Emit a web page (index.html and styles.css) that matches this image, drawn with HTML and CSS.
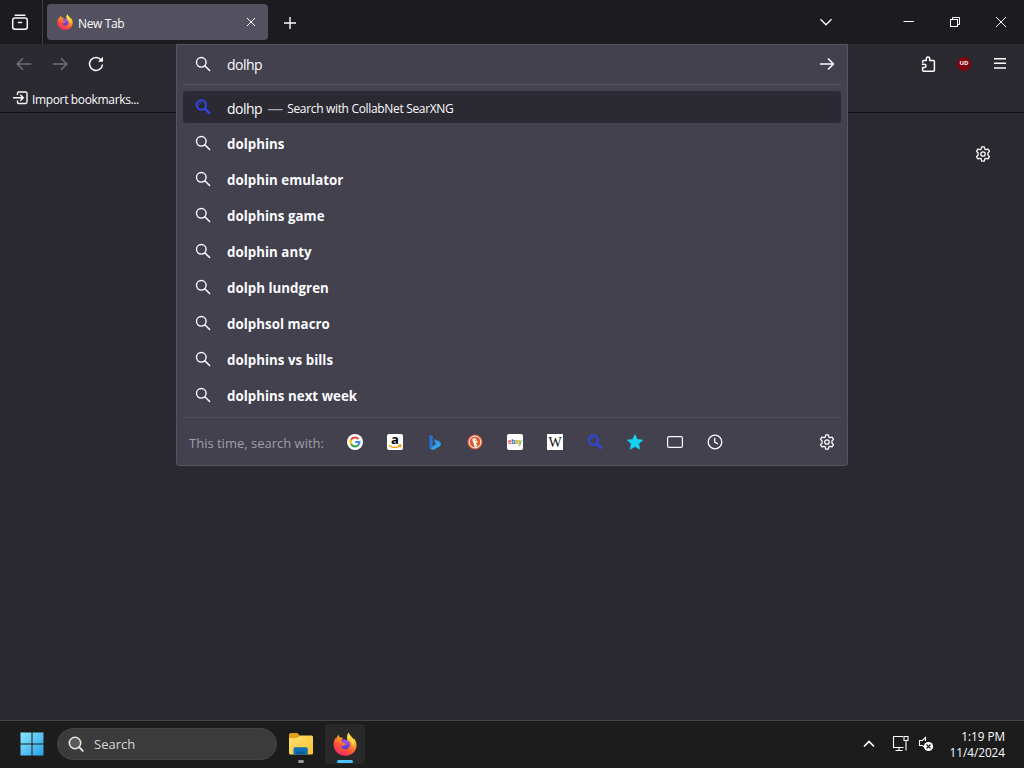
FILE: index.html
```html
<!DOCTYPE html>
<html lang="en">
<head>
    <meta charset="UTF-8">
    <title>New Tab</title>
    <link rel="stylesheet" href="styles.css">
</head>
<body>

<!-- shared icons -->
<svg class="defs" width="0" height="0">
    <defs>
        <linearGradient id="fx_body" x1="0.8" y1="0" x2="0.25" y2="1">
            <stop offset="0" stop-color="#fff44f"/>
            <stop offset="0.35" stop-color="#ffa62b"/>
            <stop offset="0.65" stop-color="#ff5634"/>
            <stop offset="1" stop-color="#f0246e"/>
        </linearGradient>
        <linearGradient id="fx_globe" x1="0" y1="0" x2="0" y2="1">
            <stop offset="0" stop-color="#a058f5"/>
            <stop offset="1" stop-color="#5438c8"/>
        </linearGradient>
        <linearGradient id="win" x1="0" y1="0" x2="1" y2="1">
            <stop offset="0" stop-color="#8be4fc"/>
            <stop offset="1" stop-color="#26a3e8"/>
        </linearGradient>
        <linearGradient id="folder" x1="0" y1="0" x2="1" y2="1">
            <stop offset="0" stop-color="#ffdf70"/>
            <stop offset="1" stop-color="#fcc42f"/>
        </linearGradient>
        <linearGradient id="bing" x1="0" y1="0" x2="1" y2="1">
            <stop offset="0" stop-color="#2a7be0"/>
            <stop offset="1" stop-color="#32bdf2"/>
        </linearGradient>
    </defs>
    <symbol id="search" viewBox="0 0 16 16">
        <circle cx="6.3" cy="6.3" r="4.8" fill="none" stroke="currentColor" stroke-width="1.4"/>
        <path d="M9.8 9.8l4.8 4.700" fill="none" stroke="currentColor" stroke-width="1.6" stroke-linecap="round"/>
    </symbol>
    <symbol id="searx" viewBox="0 0 16 16">
        <circle cx="6.3" cy="6" r="4.7" fill="none" stroke="#3146e6" stroke-width="2"/>
        <path d="M4 6a2.4 2.4 0 0 1 2.4-2.3" fill="none" stroke="#3146e6" stroke-width="0.9"/>
        <path d="M9.8 9.6l5 5" fill="none" stroke="#3146e6" stroke-width="2.4"/>
    </symbol>
    <symbol id="gear" viewBox="0 0 16 16">
        <path d="M6.7.9h2.6l.5 2.200 1.100.6 2.200-.6 1.400 2.300-1.600 1.600v2l1.600 1.600-1.400 2.300-2.200-.6-1.100.6-.5 2.200H6.700l-.5-2.200-1.100-.6-2.200.6-1.400-2.300 1.600-1.600V7L1.500 5.400l1.400-2.300 2.200.6 1.100-.6z" fill="none" stroke="currentColor" stroke-width="1.3" stroke-linejoin="round"/>
        <circle cx="8" cy="8" r="2.2" fill="none" stroke="currentColor" stroke-width="1.3"/>
    </symbol>
    <symbol id="firefox" viewBox="0 0 24 24">
        <path d="M15.7.5c.2 2.200 2.200 3.400 3.600 5.200.6.800.9 1.400 1.200 2.100.2-.8.100-1.400 0-2 2.300 2.600 3.300 5.600 3 8.200C22.900 20 18.100 23.800 12.300 23.800 6 23.800.8 19.200.6 13c-.1-3 .8-5.400 2-7.200l.4 1.500C3.600 5.500 4.400 3.900 5.700 2.800c.1 1.200.5 2 1.200 2.700 1.200-.2 2.500 0 3.500.5-1.400 1-1.900 1.900-2 2.700l2.400.7c1.100-.8 2.300-.8 3.400-.2-.4-3.400-.4-6.500 1.500-8.700z" fill="url(#fx_body)"/>
        <path d="M8.400 8.700c1.500-1.300 3.200-1.500 4.700-.7 2.600.8 4.200 2.500 4 5-.2 2.600-2.200 4.300-4.600 4.300-2.600 0-4.500-1.700-4.700-4.100 1.200.8 2.700.8 3.600.1.700-.6 1.500-.9 2.300-1-.7-1.100-2-1.300-3.100-1.100-.8-.2-1.800-1.200-2.200-2.500z" fill="url(#fx_globe)"/>
        <path d="M15.700.5c.2 2.200 2.200 3.400 3.600 5.200 2 2.800 2.300 6.300.8 9-.1-3.400-1.500-5.300-3.300-6.800C14.500 5.800 14 2.800 15.700.5z" fill="#ffdf45"/>
    </symbol>
</svg>

<div class="screen">

    <div class="tabbar">
        <div class="view_btn">
            <svg width="18" height="18" viewBox="0 0 18 18" fill="none" stroke="currentColor" stroke-width="1.5" stroke-linecap="round">
                <path d="M4.2 2.2h9.6"/>
                <rect x="1.7" y="5" width="14.6" height="11.3" rx="2.2"/>
                <path d="M7.5 9.500h3"/>
            </svg>
        </div>
        <div class="tab">
            <svg width="16" height="16"><use href="#firefox"/></svg>
            <span class="tab_title">New Tab</span>
            <svg width="10" height="10" viewBox="0 0 10 10" stroke="currentColor"><path d="M1 1l8 8M9 1l-8 8"/></svg>
        </div>
        <div class="new_tab">
            <svg width="12" height="12" viewBox="0 0 12 12" stroke="currentColor" stroke-width="1.4"><path d="M6 0v12M0 6h12"/></svg>
        </div>
        <div class="win_btns">
            <svg width="14" height="14" viewBox="0 0 14 14" fill="none" stroke="currentColor" stroke-width="1.4"><path d="M1.5 4.300L7 9.700l5.500-5.400"/></svg>
            <svg class="min" width="12" height="12" viewBox="0 0 12 12" stroke="currentColor"><path d="M0.5 5.5h10.5"/></svg>
            <svg width="12" height="12" viewBox="0 0 12 12" fill="none" stroke="currentColor"><rect x="1.5" y="3.5" width="7" height="7"/><path d="M3.5 3.5v-2h7v7h-2"/></svg>
            <svg width="12" height="12" viewBox="0 0 12 12" stroke="currentColor"><path d="M1 1l10 10M11 1L1 11"/></svg>
        </div>
    </div>

    <div class="navbar">
        <div class="nav_left">
            <svg class="dim" width="16" height="16" viewBox="0 0 16 16"><path d="M15.3 8H1.2M7 2.2L1.2 8 7 13.8"/></svg>
            <svg class="dim" width="16" height="16" viewBox="0 0 16 16"><path d="M.7 8h14.1M9 2.2L14.8 8 9 13.8"/></svg>
            <svg width="16" height="16" viewBox="0 0 16 16"><path d="M13.2 4A6.5 6.5 0 1 0 14.5 8.5"/><path d="M15 .8v5H10z" fill="currentColor" stroke="none"/></svg>
        </div>
        <div class="nav_right">
            <svg width="16" height="16" viewBox="0 0 16 16"><path d="M2.600 6.700V5.500a1 1 0 0 1 1-1h2.700V2.700a1.700 1.700 0 0 1 3.400 0v1.800h3.700a1 1 0 0 1 1 1v8.700a1 1 0 0 1-1 1H3.600a1 1 0 0 1-1-1v-2.600h1.700a1.700 1.700 0 0 0 0-3.400H1.800" stroke-linejoin="round"/></svg>
            <span class="ublock">UD</span>
            <svg width="14" height="14" viewBox="0 0 14 14"><path d="M1 1.700h12M1 6.300h12M1 10.900h12"/></svg>
        </div>
    </div>

    <div class="bookmarks">
        <svg width="15" height="14" viewBox="0 0 15 14" fill="none" stroke="currentColor" stroke-width="1.4">
            <path d="M4.500 4V2.200a1.200 1.200 0 0 1 1.200-1.200h6.900a1.400 1.400 0 0 1 1.400 1.400v8.700a1.400 1.400 0 0 1-1.400 1.400H5.700a1.200 1.200 0 0 1-1.200-1.200V9.500M0 6.800h10M7.300 3.800l3 3-3 3"/>
        </svg>
        <span>Import bookmarks...</span>
    </div>

    <div class="content">
        <svg width="16" height="16"><use href="#gear"/></svg>
    </div>

    <div class="urlbar">
        <div class="url_input">
            <svg class="icon" width="16" height="16"><use href="#search"/></svg>
            <span class="typed">dolhp</span>
            <svg width="16" height="16" viewBox="0 0 16 16" fill="none" stroke="currentColor" stroke-width="1.5"><path d="M1 8h13.5M9 2.5L14.5 8 9 13.5"/></svg>
        </div>
        <ul class="results">
            <li class="selected">
                <svg class="icon" width="16" height="16"><use href="#searx"/></svg>
                <span class="typed">dolhp</span>
                <span class="dash">—</span>
                <span class="action">Search with CollabNet SearXNG</span>
            </li>
            <li><svg class="icon" width="16" height="16"><use href="#search"/></svg><b>dolphins</b></li>
            <li><svg class="icon" width="16" height="16"><use href="#search"/></svg><b>dolphin emulator</b></li>
            <li><svg class="icon" width="16" height="16"><use href="#search"/></svg><b>dolphins game</b></li>
            <li><svg class="icon" width="16" height="16"><use href="#search"/></svg><b>dolphin anty</b></li>
            <li><svg class="icon" width="16" height="16"><use href="#search"/></svg><b>dolph lundgren</b></li>
            <li><svg class="icon" width="16" height="16"><use href="#search"/></svg><b>dolphsol macro</b></li>
            <li><svg class="icon" width="16" height="16"><use href="#search"/></svg><b>dolphins vs bills</b></li>
            <li><svg class="icon" width="16" height="16"><use href="#search"/></svg><b>dolphins next week</b></li>
        </ul>
        <div class="engines">
            <span class="engines_label">This time, search with:</span>
            <div class="engine_list">
                <!-- google -->
                <svg width="16" height="16" viewBox="0 0 16 16" fill="none" stroke-width="2.1">
                    <circle cx="8" cy="8" r="8" fill="#fff"/>
                    <path d="M11.4 5A4.5 4.5 0 0 0 4.1 5.8" stroke="#ea4335"/>
                    <path d="M4.1 5.8a4.5 4.5 0 0 0 0 4.4" stroke="#fbbc05"/>
                    <path d="M4.1 10.2a4.5 4.5 0 0 0 6.800 1.200" stroke="#34a853"/>
                    <path d="M10.9 11.4A4.5 4.5 0 0 0 12.5 8H8.2" stroke="#4285f4"/>
                </svg>
                <!-- amazon -->
                <svg width="16" height="16" viewBox="0 0 16 16">
                    <rect width="16" height="16" rx="2" fill="#fff"/>
                    <text class="amazon" x="8" y="9.8" text-anchor="middle">a</text>
                    <path d="M2 11.200c3.500 2.700 8 2.800 11.200.8M11.300 11.200l2.700-.3-.6 2.400" fill="none" stroke="#f90" stroke-width="1.2"/>
                </svg>
                <!-- bing -->
                <svg width="16" height="16" viewBox="0 0 16 16">
                    <path d="M2.500.8l3.200 1.200v9.700l-3.200 2.500z" fill="#2873db"/>
                    <path d="M7 5l5 2.300c2 1 2.500 3.500.7 5L6.200 16l-3.700-1.800 3.200-2.200 3.700-2-1.500-.8z" fill="url(#bing)"/>
                </svg>
                <!-- duckduckgo -->
                <svg width="16" height="16" viewBox="0 0 16 16">
                    <circle cx="8" cy="8" r="7.6" fill="#de5833"/>
                    <circle cx="8" cy="8" r="5.900" fill="none" stroke="#fff" stroke-width="1"/>
                    <path d="M5.400 5c.9-1.300 3.300-1.100 4.100.4.500 1 .3 1.700.4 2.500l-.8 1.100 1.200 3.300-2.600.6L6.400 8.600c-.6-1.400-.8-2.300-1-3.600z" fill="#fff"/>
                    <path d="M8.900 7.800l2.500-.3-.2 1-2 .5z" fill="#fdd20a"/>
                    <circle cx="8.300" cy="6.400" r=".5" fill="#2d4f8e"/>
                    <path d="M9.500 11l1.600-.4-.2 1.500-1 .2z" fill="#65bc46"/>
                </svg>
                <!-- ebay -->
                <svg width="16" height="16" viewBox="0 0 16 16">
                    <rect width="16" height="16" rx="2" fill="#fff"/>
                    <text class="ebay" x="1" y="10"><tspan fill="#e53238">e</tspan><tspan fill="#0064d2">b</tspan><tspan fill="#e0a000">a</tspan><tspan fill="#76a80c">y</tspan></text>
                </svg>
                <!-- wikipedia -->
                <svg width="16" height="16" viewBox="0 0 16 16">
                    <rect width="16" height="16" fill="#fff"/>
                    <text class="wiki" x="8" y="12.7" text-anchor="middle">W</text>
                </svg>
                <svg width="16" height="16"><use href="#searx"/></svg>
                <!-- bookmarks -->
                <svg width="16" height="16" viewBox="0 0 16 16"><path d="M8 .5l2.300 4.900 5.400.7-4 3.600 1.100 5.500L8 12.500l-4.800 2.700 1.100-5.500-4-3.600 5.400-.7z" fill="#12d4f2" stroke="#12d4f2" stroke-width=".6" stroke-linejoin="round"/></svg>
                <!-- tabs -->
                <svg width="16" height="16" viewBox="0 0 16 16"><rect x=".6" y="2.6" width="14.8" height="10.8" rx="1.5" fill="none" stroke="currentColor" stroke-width="1.2"/></svg>
                <!-- history -->
                <svg width="16" height="16" viewBox="0 0 16 16" fill="none" stroke="currentColor" stroke-width="1.3"><circle cx="8" cy="8" r="6.8"/><path d="M7.7 3.800v4.300l3.200 1.800"/></svg>
            </div>
            <svg class="engines_gear" width="16" height="16"><use href="#gear"/></svg>
        </div>
    </div>

    <div class="taskbar">
        <svg class="start" width="24" height="24" viewBox="0 0 24 24"><path d="M.5.5h11v11H.5zM12.5.5h11v11h-11zM.5 12.5h11v11H.5zM12.5 12.5h11v11h-11z" fill="url(#win)"/></svg>
        <div class="task_search">
            <svg width="16" height="16" viewBox="0 0 16 16"><circle cx="7" cy="7" r="5.7" fill="#5a5a5a" stroke="#e4e4e4" stroke-width="1.6"/><path d="M11.200 11.200l3.600 3.700" stroke="#e4e4e4" stroke-width="1.9" stroke-linecap="round"/></svg>
            <span>Search</span>
        </div>
        <div class="app">
            <svg width="26" height="24" viewBox="0 0 26 24">
                <path d="M1 3a2 2 0 0 1 2-2h6.500l2.500 3h-1L8 8H1z" fill="#e3a01b"/>
                <path d="M1 6h7.500L12 3.500h11.500A1.500 1.500 0 0 1 25 5v16a1.500 1.500 0 0 1-1.500 1.500h-21A1.500 1.500 0 0 1 1 21z" fill="url(#folder)"/>
                <path d="M5.500 22.500V17A1.800 1.800 0 0 1 7.300 15.200H18A1.800 1.800 0 0 1 19.800 17v5.500z" fill="#0f70b8"/>
                <path d="M8.500 19.500h8.500v3H8.500z" fill="#0b5a96"/>
            </svg>
            <i class="dot"></i>
        </div>
        <div class="app active">
            <svg width="24" height="24"><use href="#firefox"/></svg>
            <i class="dot"></i>
        </div>
        <div class="tray">
            <svg width="12" height="12" viewBox="0 0 12 12" fill="none" stroke="#fff" stroke-width="1.6"><path d="M1 8.5l5-5 5 5"/></svg>
            <svg class="net" width="17" height="17" viewBox="0 0 17 17" fill="none" stroke="#fff" stroke-width="1.1"><path d="M11 1.5H1.500v11h10M7 12.500v3M3.500 15.500h7"/><path d="M12 1.500h4v4h-4zM14 5.500v10"/></svg>
            <svg class="vol" width="16" height="16" viewBox="0 0 16 16"><path d="M7.500 5V1.500L4.500 4.500H1.500v5H4.500l1.500 1.300" fill="none" stroke="#fff" stroke-width="1.1"/><circle cx="10.500" cy="10.500" r="4.600" fill="#fff"/><path d="M8.500 8.500l4 4M12.500 8.500l-4 4" stroke="#1c1c1c" stroke-width="1.1"/></svg>
            <div class="clock">
                <div>1:19 PM</div>
                <div>11/4/2024</div>
            </div>
        </div>
    </div>

</div>
</body>
</html>
```
FILE: styles.css
```css
*{
    margin: 0px;
    padding: 0px;
    box-sizing: border-box;
}
body{
    background-color: #2a2930;
    color: #fbfbfe;
    font-family: "Open Sans", "Noto Sans", sans-serif;
    font-size: 12px;
    overflow: hidden;
}
svg{
    display: block;
    flex-shrink: 0;
    overflow: visible;
}
.defs{
    position: absolute;
}

.screen{
    position: relative;
    width: 1024px;
    height: 768px;
    display: flex;
    flex-direction: column;
}

/* tab strip */
.tabbar{
    display: flex;
    height: 44px;
    background-color: #1c1b20;
}
.view_btn{
    width: 43px;
    padding: 13px 0px 0px 11px;
    border-right: 1px solid #3f3e48;
}
.tab{
    display: flex;
    align-items: center;
    width: 221px;
    height: 36px;
    margin: 4px 0px 0px 4px;
    padding: 0px 12px 0px 10px;
    border-radius: 4px;
    background-color: #53515f;
}
.tab_title{
    flex: 1;
    margin-left: 5px;
    padding-top: 2px;
    letter-spacing: -0.35px;
}
.new_tab{
    padding: 17px 0px 0px 16px;
}
.win_btns{
    display: flex;
    align-items: center;
    gap: 34px;
    margin-left: auto;
    padding-right: 17px;
}
.win_btns .min{
    margin-left: 36px;
}

/* toolbar */
.navbar{
    display: flex;
    justify-content: space-between;
    height: 40px;
    padding: 12px 17px 0px 16px;
    background-color: #2b2a31;
}
.navbar svg{
    fill: none;
    stroke: currentColor;
    stroke-width: 1.5;
}
.nav_left{
    display: flex;
    gap: 20px;
}
.nav_left .dim{
    color: #6f6e77;
}
.nav_right{
    display: flex;
    gap: 22px;
}
.nav_right svg:first-child{
    margin-right: -1px;
}
.nav_right svg:last-child{
    margin-top: 1px;
}
.ublock{
    width: 14px;
    height: 14px;
    margin-top: 1px;
    border-radius: 7px;
    background-color: #800610;
    font-size: 6px;
    font-weight: bold;
    line-height: 13px;
    text-align: center;
}
.bookmarks{
    display: flex;
    align-items: center;
    gap: 4px;
    height: 29px;
    padding-left: 13px;
    background-color: #2b2a31;
    border-bottom: 1px solid #0f0e14;
    letter-spacing: -0.35px;
}
.bookmarks span{
    padding-top: 2px;
}
.content{
    flex: 1;
    padding: 33px 33px 0px 0px;
}
.content svg{
    margin-left: auto;
}

/* address bar drop-down, opened over the toolbar */
.urlbar{
    position: absolute;
    left: 176px;
    top: 44px;
    width: 672px;
    height: 422px;
    border: 1px solid #55535f;
    border-radius: 0px 0px 3px 3px;
    background-color: #42414d;
}
.url_input{
    display: flex;
    align-items: center;
    height: 40px;
    margin: 0px 6px;
    padding: 0px 6px 1px 12px;
    border-bottom: 1px solid #565561;
}
.url_input .typed{
    flex: 1;
    padding-top: 1px;
}
.icon{
    margin-right: 16px;
}
.typed{
    font-size: 14px;
    letter-spacing: -0.5px;
}
.results{
    list-style: none;
    padding: 6px 6px 0px;
}
.results li{
    display: flex;
    align-items: center;
    height: 32px;
    margin-bottom: 4px;
    padding-left: 12px;
    border-radius: 3px;
}
.results .selected{
    background-color: #2b2a33;
}
.results .typed{
    padding-top: 2px;
}
.results b{
    padding-top: 2px;
    font-size: 13.3px;
    letter-spacing: 0.03px;
}
.selected .dash{
    margin: 0px 4px 0px 5px;
    padding-top: 2px;
    color: #a5a4ad;
    font-size: 16px;
}
.selected .action{
    padding-top: 2px;
    letter-spacing: -0.33px;
}
.engines{
    display: flex;
    align-items: center;
    height: 49px;
    margin: 6px 6px 0px;
    padding: 0px 6px 0px 6px;
    border-top: 1px solid #4e4d59;
}
.engines_label{
    width: 158px;
    padding-top: 2px;
    color: #9f9ea8;
    font-size: 13px;
}
.engine_list{
    display: flex;
    gap: 24px;
}
.engines_gear{
    margin-left: auto;
}
.amazon{
    font: bold 13px "Open Sans", sans-serif;
}
.ebay{
    font: bold 6.5px "Liberation Sans", sans-serif;
    letter-spacing: -0.3px;
}
.wiki{
    font: 14px "Liberation Serif", serif;
    fill: #111;
}

/* taskbar */
.taskbar{
    display: flex;
    align-items: center;
    height: 48px;
    padding: 0px 19px 2px 20px;
    background-color: #1c1c1c;
    border-top: 1px solid #45444a;
}
.task_search{
    display: flex;
    align-items: center;
    gap: 10px;
    width: 220px;
    height: 32px;
    margin: 0px 4px 0px 13px;
    padding-left: 10px;
    border: 1px solid #444;
    border-radius: 16px;
    background-color: #3b3b3b;
    color: #d6d6d6;
    font-size: 13px;
}
.app{
    position: relative;
    display: flex;
    align-items: center;
    justify-content: center;
    width: 40px;
    height: 40px;
    border-radius: 4px;
}
.app.active{
    margin-left: 4px;
    background-color: #292929;
}
.dot{
    position: absolute;
    left: 17px;
    bottom: 1px;
    width: 6px;
    height: 3px;
    border-radius: 2px;
    background-color: #9a9a9a;
}
.active .dot{
    left: 12px;
    width: 16px;
    background-color: #4cc2ff;
}
.tray{
    display: flex;
    align-items: center;
    margin-left: auto;
}
.net{
    margin: 0px 9px 0px 17px;
}
.clock{
    width: 71px;
    font-size: 11.8px;
    letter-spacing: -0.05px;
    line-height: 16px;
    text-align: right;
}
```
